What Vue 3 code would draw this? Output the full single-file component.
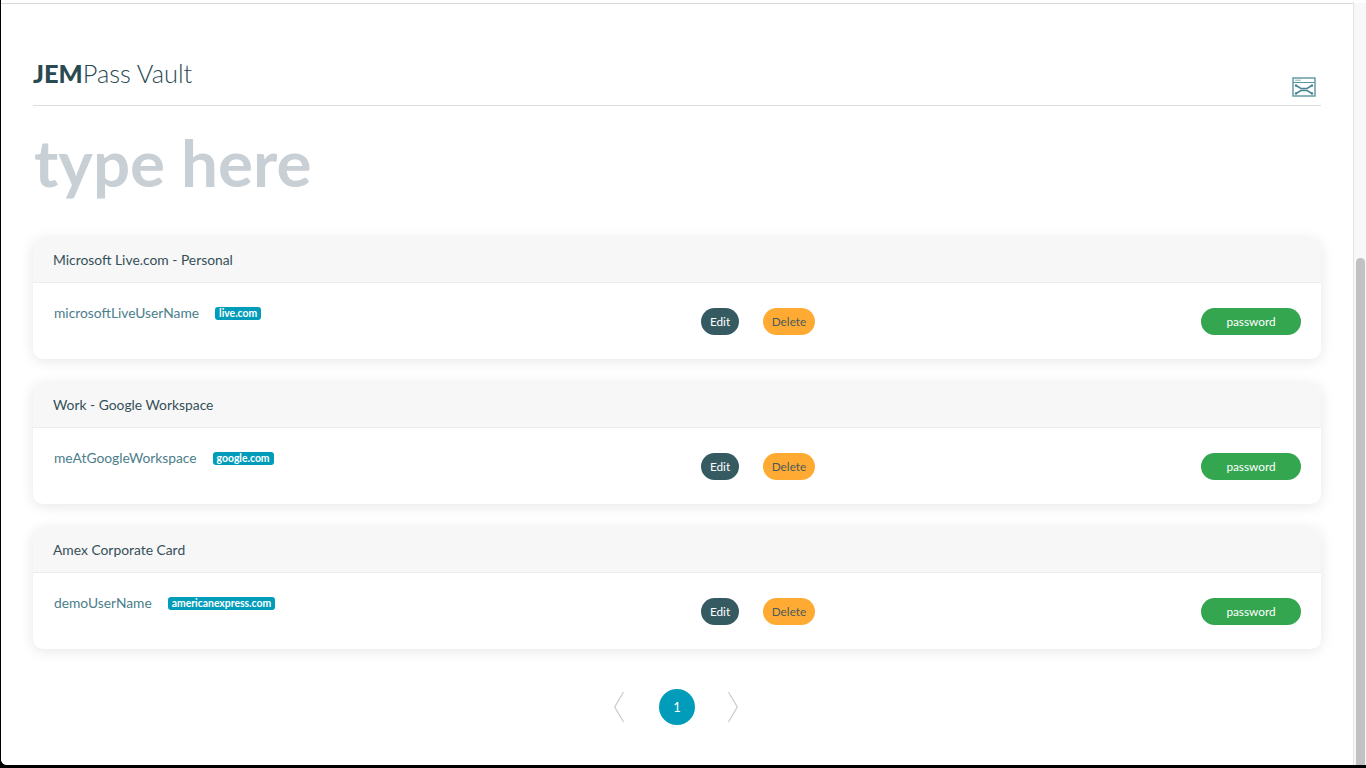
<script setup>
const entries = [
  { id: 1, title: 'Microsoft Live.com - Personal', user: 'microsoftLiveUserName', site: 'live.com' },
  { id: 2, title: 'Work - Google Workspace', user: 'meAtGoogleWorkspace', site: 'google.com' },
  { id: 3, title: 'Amex Corporate Card', user: 'demoUserName', site: 'americanexpress.com' }
]
</script>

<template>
  <div class="frame">
    <div class="window">
      <main class="page">
        <header class="vault-header">
          <h1 class="brand"><strong>JEM</strong>Pass Vault</h1>
          <svg class="layout-icon" width="24" height="20" viewBox="0 0 24 20" fill="none" aria-hidden="true">
            <rect x="1" y="1" width="22" height="18" stroke="#5d939f" stroke-width="1.4" />
            <path d="M1 5.5h22" stroke="#5d939f" stroke-width="1" />
            <path d="M3 3.2h6" stroke="#8fb4bd" stroke-width="1" />
            <path d="M4 8.5l5 3h6l5-3M4 16.5l5-3h6l5 3" stroke="#4a8592" stroke-width="1.5" />
            <circle cx="4" cy="8.5" r="1.2" fill="#4a8592" />
            <circle cx="20" cy="8.5" r="1.2" fill="#4a8592" />
            <circle cx="4" cy="16.5" r="1.2" fill="#4a8592" />
            <circle cx="20" cy="16.5" r="1.2" fill="#4a8592" />
          </svg>
        </header>

        <input class="search" type="text" placeholder="type here" />

        <section class="list">
          <article v-for="entry in entries" :key="entry.id" class="card">
            <div class="card-header">{{ entry.title }}</div>
            <div class="card-body">
              <div class="account">
                <span class="user">{{ entry.user }}</span>
                <span class="badge">{{ entry.site }}</span>
              </div>
              <div class="actions">
                <button class="btn btn-edit">Edit</button>
                <button class="btn btn-delete">Delete</button>
              </div>
              <button class="btn btn-password">password</button>
            </div>
          </article>
        </section>

        <nav class="pager">
          <svg width="10" height="32" viewBox="0 0 10 32" fill="none" aria-hidden="true">
            <path d="M9.5 1L.7 16l8.800 15" stroke="#c9c9c9" stroke-width="1.2" />
          </svg>
          <span class="page-num">1</span>
          <svg class="pager-next" width="10" height="32" viewBox="0 0 10 32" fill="none" aria-hidden="true">
            <path d="M.5 1l8.800 15-8.800 15" stroke="#c9c9c9" stroke-width="1.2" />
          </svg>
        </nav>
      </main>
      <div class="scrollbar"><div class="thumb"></div></div>
    </div>
  </div>
</template>

<style scoped>
.frame {
  height: 768px;
  overflow: hidden;
  box-sizing: border-box;
  padding: 0 0 3px 1px;
  background: #000;
}

.window {
  display: flex;
  height: 100%;
  overflow: hidden;
  background: #fff;
  border-bottom-left-radius: 6px;
  font-family: "Lato", "Noto Sans", sans-serif;
}

.page {
  width: 1352px;
  flex: none;
  box-sizing: border-box;
  padding: 3px 32px 0;
  background: #fff;
}

.page::before {
  content: "";
  display: block;
  height: 1px;
  margin: 0 -32px;
  background: #d9d9d9;
}

.vault-header {
  display: flex;
  justify-content: space-between;
  align-items: flex-end;
  height: 102px;
  box-sizing: border-box;
  border-bottom: 1px solid #dcdfe0;
}

.brand {
  margin: 0 0 17px;
  font-size: 25.4px;
  line-height: 30px;
  font-weight: 300;
  color: #2a4a52;
}

.brand strong {
  font-weight: 900;
}

.layout-icon {
  margin: 0 5px 8px 0;
}

.search {
  display: block;
  width: 100%;
  height: 110px;
  box-sizing: border-box;
  padding: 0 1px;
  border: 0;
  outline: 0;
  background: transparent;
  font-family: inherit;
  font-size: 65.5px;
  font-weight: 700;
  color: #2a4a52;
}

.search::placeholder {
  color: #c8d0d6;
  opacity: 1;
}

.list {
  display: flex;
  flex-direction: column;
  gap: 24px;
  margin-top: 22px;
}

.card {
  height: 121px;
  border-radius: 10px;
  overflow: hidden;
  background: #fff;
  box-shadow: 0 2px 14px rgba(0, 0, 0, 0.1);
}

.card-header {
  height: 45px;
  box-sizing: border-box;
  padding-left: 20px;
  border-bottom: 1px solid #ececec;
  background: #f7f7f7;
  font-size: 13.85px;
  line-height: 43px;
  color: #355058;
}

.card-body {
  display: grid;
  grid-template-columns: 647px 1fr auto;
  height: 76px;
  box-sizing: border-box;
  padding: 25px 20px 0 21px;
}

.account {
  display: flex;
  align-items: flex-start;
  gap: 16px;
}

.user {
  font-size: 13.8px;
  line-height: 10px;
  color: #4b7e8b;
}

.badge {
  margin-top: -1px;
  height: 13px;
  padding: 0 4px;
  border-radius: 3px;
  background: #009cba;
  color: #fff;
  font-size: 10.4px;
  font-weight: 700;
  line-height: 13px;
}

.actions {
  display: flex;
  gap: 24px;
}

.btn {
  height: 27px;
  padding: 0;
  border: 0;
  border-radius: 14px;
  font-family: inherit;
  font-size: 11.8px;
}

.btn-edit {
  width: 38px;
  background: #355a62;
  color: #fff;
}

.btn-delete {
  width: 52px;
  background: #ffab33;
  color: #4a5a5c;
}

.btn-password {
  width: 100px;
  background: #33a64f;
  color: #fff;
}

.pager {
  display: flex;
  justify-content: center;
  align-items: center;
  gap: 35px;
  margin-top: 40px;
}

.pager-next {
  margin-left: -2px;
  margin-right: 2px;
}

.page-num {
  display: flex;
  align-items: center;
  justify-content: center;
  width: 36px;
  height: 36px;
  border-radius: 50%;
  background: #009cba;
  color: #fff;
  font-size: 13px;
}

.scrollbar {
  flex: 1;
  box-sizing: border-box;
  border-left: 1px solid #e4e4e4;
  border-top: 3px solid #fff;
  background: #f8f8f8;
  padding: 255px 1px 0 2px;
}

.thumb {
  height: 520px;
  border-radius: 5px;
  background: #c1c1c1;
}
</style>
